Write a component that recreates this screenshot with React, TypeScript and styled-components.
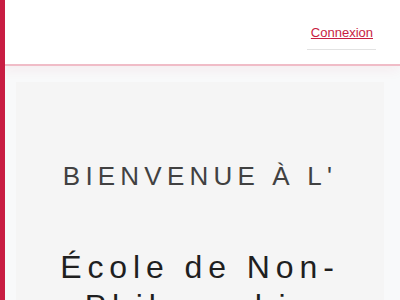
import styled, { createGlobalStyle } from 'styled-components';

const GlobalStyle = createGlobalStyle`
  html, body {
    margin: 0;
    padding: 0;
    background: #f8f9fa;
    font-family: 'Liberation Sans', Arial, sans-serif;
  }
`;

const SideStripe = styled.div`
  position: fixed;
  top: 0;
  left: 0;
  bottom: 0;
  width: 5px;
  background: #c81d42;
  z-index: 10;
`;

const Header = styled.header`
  height: 64px;
  background: #ffffff;
  border-bottom: 2px solid #f0bcc7;
  box-shadow: 0 4px 12px rgba(200, 29, 66, 0.06);
  display: flex;
  align-items: flex-start;
  justify-content: flex-end;
  padding: 0 24px;
`;

const NavList = styled.ul`
  list-style: none;
  margin: 0;
  padding: 0;
  display: flex;
`;

const NavItem = styled.li`
  margin-top: 24px;
  padding: 0 3px 9px 4px;
  border-bottom: 1px solid #e2e2e2;
  line-height: 15px;
`;

const NavLink = styled.a`
  color: #c81d42;
  font-size: 13px;
  text-decoration: underline;
`;

const Main = styled.main`
  padding: 16px;
`;

const Hero = styled.section`
  background: #f5f5f5;
  padding: 79px 24px 40px;
  text-align: center;
`;

const Kicker = styled.p`
  margin: 0;
  font-size: 26px;
  line-height: 1.2;
  letter-spacing: 0.2em;
  text-transform: uppercase;
  color: #414141;
`;

const Title = styled.h1`
  margin: 56px 0 0;
  font-size: 32px;
  font-weight: 400;
  line-height: 1.22;
  letter-spacing: 0.185em;
  color: #1f1f1f;
`;

export default function App() {
  return (
    <>
      <GlobalStyle />
      <SideStripe />
      <Header>
        <NavList>
          <NavItem>
            <NavLink href="#">Connexion</NavLink>
          </NavItem>
        </NavList>
      </Header>
      <Main>
        <Hero>
          <Kicker>Bienvenue à l'</Kicker>
          <Title>École de Non-Philosophie</Title>
        </Hero>
      </Main>
    </>
  );
}
